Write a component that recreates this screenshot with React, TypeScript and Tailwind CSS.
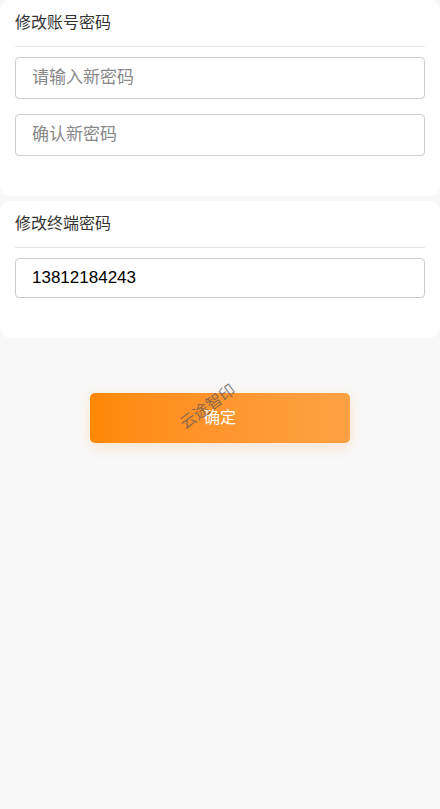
const FONT = '[font-family:"Liberation_Sans","Noto_Sans_CJK_SC",sans-serif]'

function Field({ placeholder, value, tall }: { placeholder?: string; value?: string; tall?: boolean }) {
  return (
    <input
      className={`block w-full ${tall ? 'h-[42px]' : 'h-[40px]'} rounded-[4px] border border-[#cccccc] bg-white px-4 text-[17px] text-black placeholder:text-[#888888] outline-none ${FONT}`}
      placeholder={placeholder}
      defaultValue={value}
    />
  )
}

function Card({ title, children, pb }: { title: string; children: React.ReactNode; pb: string }) {
  return (
    <div className={`bg-white rounded-[10px] px-[15px] ${pb}`}>
      <div className="h-[47px] flex items-center border-b border-[#e5e5e5]">
        <span className={`text-[16px] text-[#333333] ${FONT}`}>{title}</span>
      </div>
      <div className="pt-[10px] flex flex-col gap-[15px]">{children}</div>
    </div>
  )
}

export default function App() {
  return (
    <div className={`w-[440px] h-[809px] bg-[#f8f8f8] ${FONT}`}>
      <Card title="修改账号密码" pb="pb-[40px]">
        <Field placeholder="请输入新密码" tall />
        <Field placeholder="确认新密码" tall />
      </Card>
      <div className="mt-[5px]">
        <Card title="修改终端密码" pb="pb-[40px]">
          <Field value="13812184243" />
        </Card>
      </div>
      <div className="mt-[55px] flex justify-center">
        <button className="relative w-[260px] h-[50px] rounded-[5px] bg-gradient-to-r from-[#ff8800] to-[#ffa244] text-white text-[16px] shadow-[0_4px_14px_rgba(255,136,0,0.18)]">
          确定
          <span className="absolute left-[86px] top-[2px] -rotate-[36deg] text-[16px] text-[#555555]/70 pointer-events-none whitespace-nowrap">
            云途智印
          </span>
        </button>
      </div>
    </div>
  )
}
